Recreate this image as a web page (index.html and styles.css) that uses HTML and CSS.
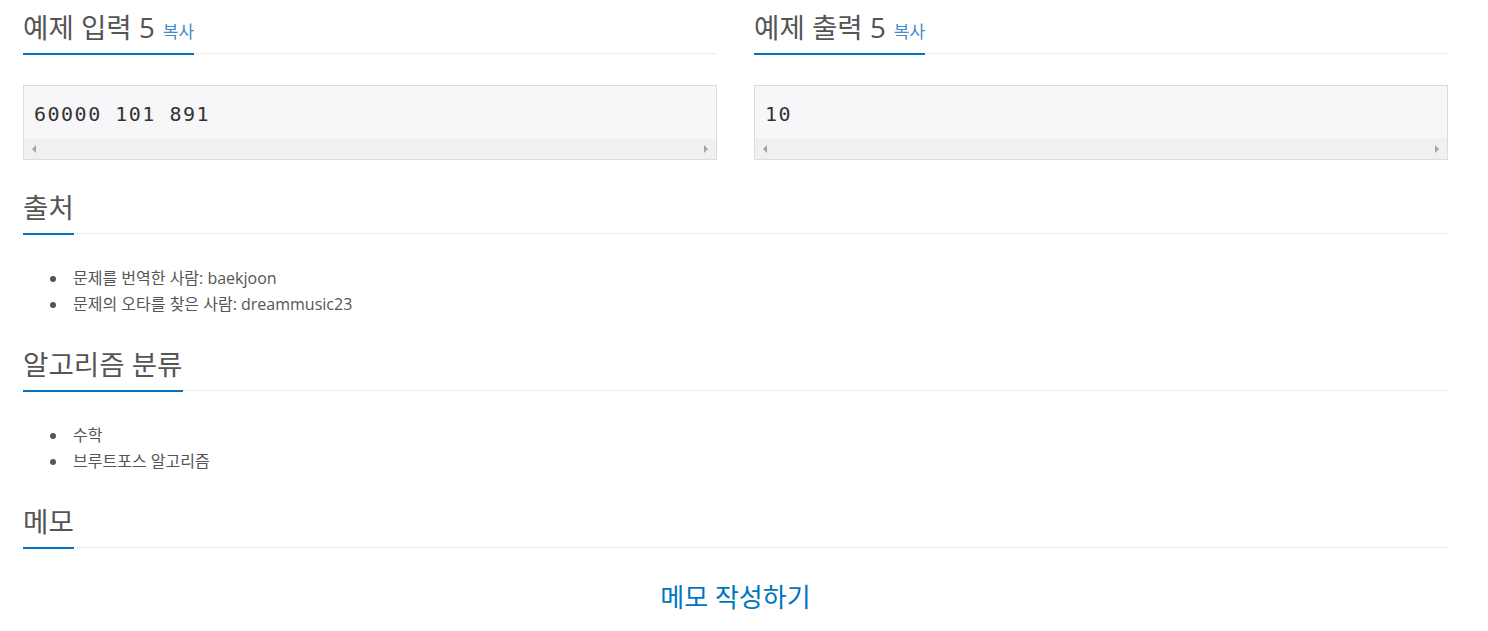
FILE: index.html
```html
<!DOCTYPE html>
<html lang="ko">
<head>
    <meta charset="UTF-8">
    <meta name="viewport" content="width=device-width, initial-scale=1.0">
    <title>예제 입력 5</title>
    <link rel="stylesheet" href="styles.css">
</head>
<body>
    <div class="container">
        <section class="section samples">
            <div class="sample-col">
                <div class="headline">
                    <h2>예제 입력 5 <a href="#" class="copy-button">복사</a></h2>
                </div>
                <div class="sample-box">
                    <pre class="sampledata">60000 101 891</pre>
                    <div class="fake-scroll">
                        <span class="arrow arrow-left"></span>
                        <span class="arrow arrow-right"></span>
                    </div>
                </div>
            </div>
            <div class="sample-col">
                <div class="headline">
                    <h2>예제 출력 5 <a href="#" class="copy-button">복사</a></h2>
                </div>
                <div class="sample-box">
                    <pre class="sampledata">10</pre>
                    <div class="fake-scroll">
                        <span class="arrow arrow-left"></span>
                        <span class="arrow arrow-right"></span>
                    </div>
                </div>
            </div>
        </section>

        <section class="section">
            <div class="headline">
                <h2>출처</h2>
            </div>
            <ul class="problem-text">
                <li>문제를 번역한 사람: baekjoon</li>
                <li>문제의 오타를 찾은 사람: dreammusic23</li>
            </ul>
        </section>

        <section class="section">
            <div class="headline">
                <h2>알고리즘 분류</h2>
            </div>
            <ul class="problem-text">
                <li>수학</li>
                <li>브루트포스 알고리즘</li>
            </ul>
        </section>

        <section class="section">
            <div class="headline">
                <h2>메모</h2>
            </div>
            <div class="memo-write">
                <a href="#">메모 작성하기</a>
            </div>
        </section>
    </div>
</body>
</html>
```

FILE: styles.css
```css
/* problem page bottom part: samples, source, tags, memo */
body {
    margin: 0;
    padding-top: 9px;
    font-family: "Open Sans", "Noto Sans CJK KR", sans-serif;
    color: #555;
    background-color: #fff;
}

a {
    text-decoration: none;
}

.container {
    width: 1425px;
    margin-left: 23px;
}

.section {
    margin-bottom: 29px;
}

.samples {
    display: grid;
    grid-template-columns: 694px 694px;
    column-gap: 37px;
}

.headline {
    border-bottom: 1px dotted #dcdcdc;
    margin-bottom: 31px;
}

.headline h2 {
    display: inline-block;
    margin: 0 0 -2px 0;
    padding-bottom: 8px;
    border-bottom: 2px solid #0076c0;
    font-size: 27.6px;
    font-weight: normal;
    line-height: 36px;
    color: #555;
}

.copy-button {
    margin-left: 1px;
    font-size: 17px;
    line-height: 1;
    color: #428bca;
}

.sample-box {
    border: 1px solid #dcdcdc;
    background-color: #f7f7f9;
}

.sampledata {
    margin: 0;
    padding: 13px 10px 8px;
    font-family: "DejaVu Sans Mono", monospace;
    font-size: 20px;
    line-height: 31px;
    letter-spacing: 1.5px;
    color: #333;
}

.fake-scroll {
    height: 21px;
    padding: 0 8px;
    background-color: #f0f0f0;
    display: flex;
    align-items: center;
    justify-content: space-between;
}

.arrow {
    width: 0;
    height: 0;
    border-top: 4px solid transparent;
    border-bottom: 4px solid transparent;
}

.arrow-left {
    border-right: 4px solid #a3a3a3;
}

.arrow-right {
    border-left: 4px solid #a3a3a3;
}

.problem-text {
    margin: 0;
    padding: 1px 0 0 45px;
    font-size: 16px;
    line-height: 25.5px;
}

.problem-text li {
    padding-left: 5px;
}

.memo-write {
    text-align: center;
    font-size: 26px;
    line-height: 36px;
}

.memo-write a {
    color: #0076c0;
}
```
